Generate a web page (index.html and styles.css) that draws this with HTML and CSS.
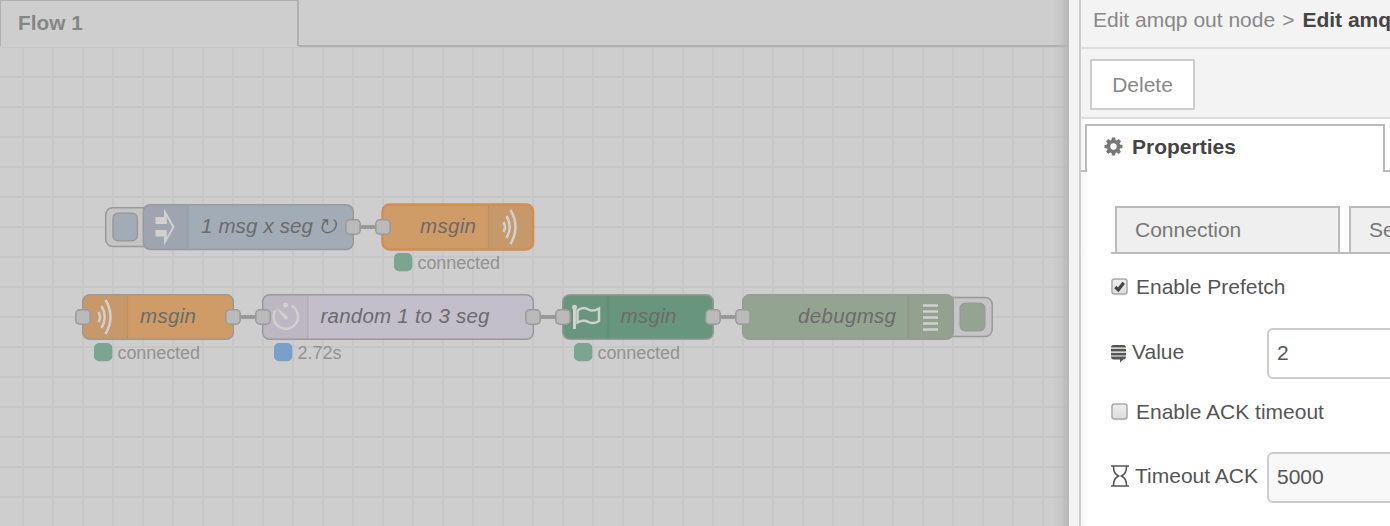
FILE: index.html
```html
<!DOCTYPE html>
<html lang="en">
<head>
<meta charset="utf-8">
<title>Flow editor</title>
<link rel="stylesheet" href="styles.css">
</head>
<body>
<div class="editor">
  <main class="workspace">
    <div class="tabs"><div class="tab">Flow 1</div><div class="tabs-rest"></div></div>
    <svg class="canvas" viewBox="0 47 1069 479" width="1069" height="479">
      <defs>
        <pattern id="grid" x="22" y="46" width="30" height="30" patternUnits="userSpaceOnUse">
          <path class="grid-line" d="M0 0H30V2H2V30H0Z"/>
        </pattern>
        <g id="port"><rect class="port" x="-7.2" y="-7.2" width="14.4" height="14.4" rx="4"/></g>
        <g id="waves" class="icon-line"><path d="M0 -5Q3 0 0 5M3 -11Q9.5 0 3 11M7 -17Q17 0 7 17"/></g>
      </defs>
      <rect y="47" width="1069" height="479" fill="url(#grid)"/>
      <path class="wire" d="M353 227H383M233 317H263M533 317H563M713 317H743"/>

      <rect class="button" x="105.7" y="207.7" width="50" height="38.8" rx="7"/>
      <rect class="button-core inject" x="113" y="213.3" width="24.3" height="27.4" rx="5"/>
      <rect class="node inject" x="143.3" y="204.8" width="210" height="44.6" rx="7"/>
      <path class="shade" d="M188 205.5H150Q144 205.5 144 211V243Q144 248.7 150 248.7H188Z"/>
      <path class="divider" d="M188 206V248.5"/>
      <path class="icon-fill" fill-rule="evenodd" d="M155.5 217H164V208.5L174.6 227L164 245.5V236.5H155.5V230H166.8V237.3L172.2 227L166.8 217.5V224H155.5Z"/>
      <text class="label" x="201" y="233" textLength="112">1 msg x seg</text>
      <path class="repeat" d="M322.5 220H327.5V225M327 220.5C322 222.500 321 229 324 231.500C328 234.500 336 231 336.300 224C336.300 222 335 220.300 333.500 219.800"/>
      <use href="#port" x="353" y="227"/>

      <rect class="node amqp selected" x="382.5" y="204.5" width="150.6" height="45" rx="7"/>
      <path class="shade" d="M488 206H526Q532 206 532 212V242Q532 248 526 248H488Z"/>
      <path class="divider" d="M488.5 206V248"/>
      <use href="#waves" x="503.5" y="227"/>
      <text class="label" x="420" y="233" textLength="56">msgin</text>
      <use href="#port" x="383" y="227"/>
      <rect class="dot green" x="394" y="253" width="18.3" height="18.3" rx="5"/>
      <text class="status" x="417.5" y="269" textLength="82.5">connected</text>

      <rect class="node amqp" x="82.7" y="294.7" width="150.6" height="44.6" rx="7"/>
      <path class="shade" d="M128 295.5H90Q83.5 295.5 83.5 302V332Q83.5 338.5 90 338.5H128Z"/>
      <path class="divider" d="M127.5 296V338"/>
      <use href="#waves" x="98.5" y="317"/>
      <text class="label" x="140" y="323" textLength="56">msgin</text>
      <use href="#port" x="83" y="317"/><use href="#port" x="233" y="317"/>
      <rect class="dot green" x="94" y="343" width="18.3" height="18.3" rx="5"/>
      <text class="status" x="117.5" y="359" textLength="82.5">connected</text>

      <rect class="node delay" x="262.7" y="294.7" width="270.6" height="44.6" rx="7"/>
      <path class="shade" d="M308 295.5H270Q263.5 295.5 263.5 302V332Q263.5 338.5 270 338.5H308Z"/>
      <path class="divider" d="M308 296V338"/>
      <path class="icon-line" d="M291.5 305.8A12.2 12.2 0 1 1 275.4 310.3"/>
      <circle class="icon-fill" cx="285.5" cy="305" r="2.5"/>
      <path class="icon-fill" d="M275.7 307L287.3 315.7A2.2 2.2 0 0 1 284.3 318.9Z"/>
      <text class="label" x="320.5" y="323" textLength="169">random 1 to 3 seg</text>
      <use href="#port" x="263" y="317"/><use href="#port" x="533" y="317"/>
      <rect class="dot blue" x="274" y="343" width="18.3" height="18.3" rx="5"/>
      <text class="status" x="297.5" y="359" textLength="44">2.72s</text>

      <rect class="node ack" x="562.7" y="294.7" width="150.6" height="44.6" rx="7"/>
      <path class="shade ack-shade" d="M608 295.5H570Q563.5 295.5 563.5 302V332Q563.5 338.5 570 338.5H608Z"/>
      <path class="divider" d="M608 296V338"/>
      <circle class="icon-fill" cx="574.5" cy="307.3" r="2.5"/>
      <path class="icon-fill" d="M573 308H576V329H573Z"/>
      <path class="icon-line flag" d="M577.5 310.5Q583 306 588.5 309.5Q593 312 599 308.5V321Q593 324.5 588.5 322Q583 319.5 577.5 322.5Z"/>
      <text class="label" x="620.5" y="323" textLength="56">msgin</text>
      <use href="#port" x="563" y="317"/><use href="#port" x="713" y="317"/>
      <rect class="dot green" x="574" y="343" width="18.3" height="18.3" rx="5"/>
      <text class="status" x="597.5" y="359" textLength="82.5">connected</text>

      <rect class="button" x="942" y="297.5" width="50.2" height="39" rx="7"/>
      <rect class="button-core debug" x="960.2" y="303.3" width="24.6" height="27.4" rx="5"/>
      <rect class="node debug" x="742.7" y="294.7" width="210.6" height="44.6" rx="7"/>
      <path class="shade" d="M908 295.5H946Q952.5 295.5 952.5 302V332Q952.5 338.5 946 338.5H908Z"/>
      <path class="divider" d="M908 296V338"/>
      <path class="bars" d="M923 305.5H938M923 311.5H938M923 317.5H938M923 323.5H938M923 329.5H938"/>
      <text class="label" x="798" y="323" textLength="98">debugmsg</text>
      <use href="#port" x="743" y="317"/>
    </svg>
  </main>
  <aside class="tray">
    <div class="resize-edge"></div>
    <div class="tray-body">
      <header class="crumbs"><span class="parent">Edit amqp out node</span><span class="arrow">&gt;</span><b>Edit amqp</b></header>
      <div class="toolbar"><button class="delete">Delete</button></div>
      <div class="prop-tabs">
        <div class="line-start"></div>
        <div class="prop-tab">
          <svg class="gear" width="19" height="19" viewBox="-9.5 -9.5 19 19"><g id="gear"><path d="M-1.6 -9H1.6L2.2 -5H-2.2ZM-1.6 9H1.6L2.2 5H-2.2ZM-9 -1.6V1.6L-5 2.2V-2.2ZM9 -1.6V1.6L5 2.2V-2.2Z"/><path transform="rotate(45)" d="M-1.6 -9H1.6L2.2 -5H-2.2ZM-1.6 9H1.6L2.2 5H-2.2ZM-9 -1.6V1.6L-5 2.2V-2.2ZM9 -1.6V1.6L5 2.2V-2.2Z"/></g><circle class="ring" r="5"/></svg>
          <b>Properties</b>
        </div>
        <div class="line-end"></div>
      </div>
      <div class="sub-tabs"><div class="sub-tab">Connection</div><div class="sub-tab">Se</div></div>
      <form class="form">
        <div class="row prefetch">
          <svg class="check" width="18" height="18" viewBox="0 0 18 18"><use href="#box"/><path class="tick" d="M4.3 9L7.3 11.8L12.7 4.8"/></svg>
          <span>Enable Prefetch</span>
        </div>
        <div class="row value">
          <svg class="stack" width="16" height="19" viewBox="0 0 16 19"><path d="M2.5 1H12.500Q15 1 15 3.600H0Q0 1 2.500 1ZM0 4.800H15V7.500H0ZM0 8.700H15V11.400H0ZM0 12.600H15Q15 15.500 12.200 15.500L9 18.500V15.500H2.500Q0 15.500 0 12.600Z"/></svg>
          <span class="name">Value</span><div class="field">2</div>
        </div>
        <div class="row ack-row">
          <svg class="check" width="18" height="18" viewBox="0 0 18 18"><defs><linearGradient id="face" x2="0" y2="1"><stop class="face-top" offset="0"/><stop class="face-end" offset="1"/></linearGradient></defs><g id="box"><rect class="box-shadow" x="1" y="2" width="15.500" height="15.500" rx="3"/><rect class="box" x="1" y="1" width="15" height="15" rx="2.500"/></g></svg>
          <span>Enable ACK timeout</span>
        </div>
        <div class="row timeout">
          <svg class="hourglass" width="19" height="22" viewBox="0 0 19 22"><path d="M0 1H18M0 21H18M2.500 1C2.500 7 4 9 7.500 11C4 13 2.500 15 2.500 21M15.500 1C15.500 7 14 9 10.500 11C14 13 15.500 15 15.500 21"/></svg>
          <span class="name">Timeout ACK</span><div class="field disabled">5000</div>
        </div>
      </form>
    </div>
  </aside>
</div>
</body>
</html>
```
FILE: styles.css
```css
* { box-sizing: border-box; }
body { margin: 0; overflow: hidden; font: 20px/30px "Liberation Sans", Arial, sans-serif; color: #555; }
.editor { display: flex; width: 1390px; height: 526px; overflow: hidden; background: #cecece; }
.workspace { width: 1069px; flex: none; position: relative; }
.workspace::after { content: ""; position: absolute; top: 0; right: 0; width: 16px; height: 100%; background: linear-gradient(90deg, #b8b8b800, #b8b8b855 50%, #b6b6b6 100%); }
.tabs { display: flex; height: 47px; }
.tab { width: 299px; border: solid #b0b0b0; border-width: 1px 2px 0 1px; padding: 7px 17px; font-weight: bold; font-size: 20.8px; color: #868686; height: 46px; }
.tabs-rest { flex: 1; height: 47px; border-bottom: 2px solid #b0b0b0; }
.canvas { display: block; }
.grid-line { fill: #c7c7c7; }
.wire { stroke: #999; stroke-width: 4; fill: none; }
.port { fill: #bababa; stroke: #999; stroke-width: 1.5; }
.node { stroke: #999; stroke-width: 1.5; }
.button { fill: #c5c5c5; stroke: #999; stroke-width: 1.5; }
.button-core { stroke: #999; stroke-width: 1.5; }
.inject { fill: #a2acb6; }
.amqp { fill: #cf9c68; }
.amqp.selected { stroke: #d08e55; stroke-width: 2.5; }
.delay { fill: #c2bfca; }
.ack { fill: #68967d; }
.debug { fill: #93a591; }
.shade { fill: #92857b; fill-opacity: .12; }
.inject + .shade { fill: #99a; fill-opacity: .35; }
.ack-shade { fill-opacity: .02; }
.divider { stroke: #000; stroke-opacity: .06; stroke-width: 1.5; }
.icon-fill { fill: #d0d0d0; }
.icon-line { fill: none; stroke: #d0d0d0; stroke-width: 2.5; }
.bars { stroke: #d0d0d0; stroke-width: 2.7; }
.label { font-size: 20.5px; font-style: italic; fill: #6b6b6b; }
.repeat { fill: none; stroke: #6b6b6b; stroke-width: 1.4; }
.status { font-size: 18px; fill: #929292; }
.dot.green { fill: #7aa592; }
.dot.blue { fill: #78a0ca; }
.tray { flex: 1; display: flex; min-width: 0; overflow: hidden; background: #fff; }
.resize-edge { width: 12px; flex: none; background: #f3f3f3; border-right: 2px solid #ccc; }
.tray-body { width: 309px; flex: none; white-space: nowrap; overflow: hidden; background: linear-gradient(90deg, #f5f5f5, #fff 8px); }
.crumbs { height: 49px; padding: 5px 12px; background: #f3f3f3; border-bottom: 2px solid #ddd; color: #888; font-size: 21px; }
.crumbs .arrow { margin: 0 8px 0 7px; }
.crumbs b { color: #444; }
.toolbar { height: 70px; padding: 10px 9px; background: #f3f3f3; border-bottom: 2px solid #ddd; }
.delete { width: 105px; height: 51px; border: 2px solid #ccc; border-radius: 1px; background: #fff; color: #888; font: inherit; font-size: 21px; padding: 0; }
.prop-tabs { display: flex; height: 53px; padding-top: 5px; align-items: flex-end; }
.line-start { width: 4px; border-bottom: 2px solid #bbb; }
.line-end { flex: 1; border-bottom: 2px solid #bbb; }
.prop-tab { width: 300px; height: 48px; border: 2px solid #bbb; border-bottom: 0; background: #fff; display: flex; padding: 6px 17px; color: #444; font-size: 21px; }
.gear { margin: 5px 9px 0 0; fill: #777; }
.ring { fill: none; stroke: #777; stroke-width: 3.6; }
.sub-tabs { display: flex; gap: 9px; width: 360px; height: 48px; margin: 34px 0 0 30px; padding-left: 4px; border-bottom: 2px solid #bbb; }
.sub-tab { width: 225px; flex: none; height: 46px; border: 2px solid #bbb; border-bottom: 0; background: #efefef; padding: 7px 18px; color: #777; font-size: 21px; }
.form { margin: 0 0 0 30px; width: 440px; font-size: 21px; }
.row { display: flex; align-items: center; }
.row > * { flex: none; }
.prefetch { height: 66px; }
.check { margin-right: 7px; }
.box { fill: url(#face); stroke: #aaa; stroke-width: 1.5; }
.face-top { stop-color: #eee; }
.face-end { stop-color: #ddd; }
.box-shadow { fill: #e8e8e8; }
.tick { fill: none; stroke: #444; stroke-width: 3.2; }
.value { height: 67px; }
.stack { fill: #555; margin-right: 5px; }
.name { width: 135px; padding-bottom: 3px; }
.field { width: 280px; height: 51px; border: 2px solid #ccc; border-radius: 6px; padding: 8px; background: #fff; }
.field.disabled { background: #f8f8f8; }
.ack-row { height: 49px; }
.timeout { height: 83px; }
.hourglass { fill: none; stroke: #555; stroke-width: 1.6; margin: 0 5px 3px 0; }
.timeout .name { width: 132px; }
```
